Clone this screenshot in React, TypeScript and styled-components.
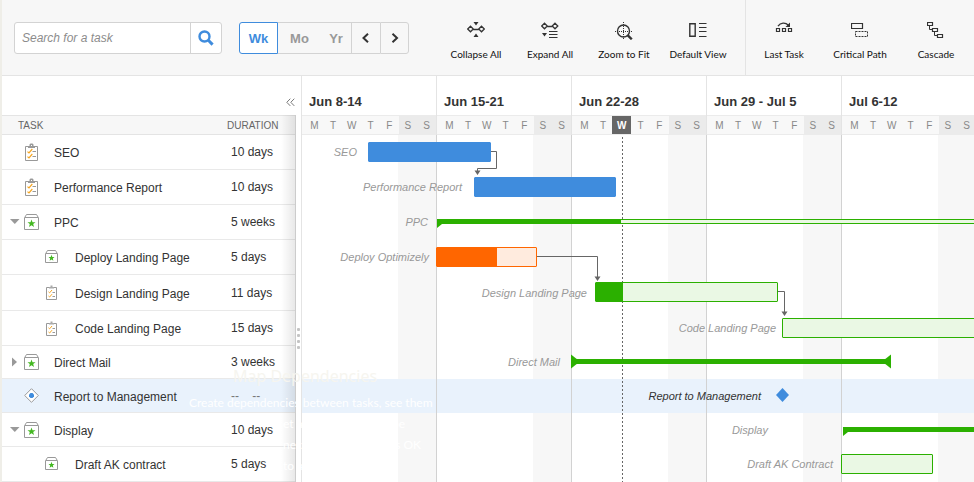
import React from 'react';
import styled, { createGlobalStyle } from 'styled-components';

const GlobalStyle = createGlobalStyle`
  *, *::before, *::after { box-sizing: border-box; }
  body {
    margin: 0;
    background: #fff;
    color: #333;
    font-family: 'Liberation Sans', Arial, sans-serif;
    font-size: 12px;
  }
  button, input { font: inherit; color: inherit; margin: 0; }
  svg { display: block; flex: none; }
`;

const colors = {
  blue: '#3f8cdd',
  green: '#2bb000',
  greenLight: '#eaf8e4',
  orange: '#ff6600',
  orangeLight: '#ffebde',
  line: '#e4e4e4',
  highlight: '#e9f2fc',
};

/* ---------- data ---------- */

type IconKind = 'task' | 'project' | 'milestone';

interface TaskRow {
  name: string;
  duration: string;
  icon: IconKind;
  child?: boolean;
  caret?: 'open' | 'closed';
  height: number;
  selected?: boolean;
  label: string;
  labelEnd: number;
  kind: 'bar' | 'summary' | 'span' | 'milestone';
  tone: 'blue' | 'green' | 'orange';
  start: number;
  end: number;
  done: number;
}

const rows: TaskRow[] = [
  { name: 'SEO', duration: '10 days', icon: 'task', height: 35, label: 'SEO', labelEnd: 55, kind: 'bar', tone: 'blue', start: 66, end: 189, done: 189 },
  { name: 'Performance Report', duration: '10 days', icon: 'task', height: 35, label: 'Performance Report', labelEnd: 160, kind: 'bar', tone: 'blue', start: 172, end: 314, done: 314 },
  { name: 'PPC', duration: '5 weeks', icon: 'project', caret: 'open', height: 35, label: 'PPC', labelEnd: 126, kind: 'summary', tone: 'green', start: 135, end: 800, done: 319 },
  { name: 'Deploy Landing Page', duration: '5 days', icon: 'project', child: true, height: 35, label: 'Deploy Optimizely', labelEnd: 127, kind: 'bar', tone: 'orange', start: 134, end: 235, done: 195 },
  { name: 'Design Landing Page', duration: '11 days', icon: 'task', child: true, height: 36, label: 'Design Landing Page', labelEnd: 285, kind: 'bar', tone: 'green', start: 293, end: 476, done: 321 },
  { name: 'Code Landing Page', duration: '15 days', icon: 'task', child: true, height: 35, label: 'Code Landing Page', labelEnd: 474, kind: 'bar', tone: 'green', start: 480, end: 800, done: 480 },
  { name: 'Direct Mail', duration: '3 weeks', icon: 'project', caret: 'closed', height: 33, label: 'Direct Mail', labelEnd: 258, kind: 'span', tone: 'green', start: 269, end: 589, done: 589 },
  { name: 'Report to Management', duration: '--    --', icon: 'milestone', height: 34, selected: true, label: 'Report to Management', labelEnd: 459, kind: 'milestone', tone: 'blue', start: 474, end: 487, done: 487 },
  { name: 'Display', duration: '10 days', icon: 'project', caret: 'open', height: 34, label: 'Display', labelEnd: 466, kind: 'summary', tone: 'green', start: 541, end: 800, done: 800 },
  { name: 'Draft AK contract', duration: '5 days', icon: 'project', child: true, height: 35, label: 'Draft AK Contract', labelEnd: 531, kind: 'bar', tone: 'green', start: 539, end: 631, done: 539 },
];

const weeks = ['Jun 8-14', 'Jun 15-21', 'Jun 22-28', 'Jun 29 - Jul 5', 'Jul 6-12'];
const days = ['M', 'T', 'W', 'T', 'F', 'S', 'S'];
const today = { week: 2, day: 2, offset: 320 };

/* ---------- page and toolbar ---------- */

const Page = styled.div`
  border-left: 2px solid #efeee8;
  overflow: hidden;
`;

const Toolbar = styled.header`
  display: flex;
  align-items: stretch;
  height: 76px;
  padding-left: 12px;
  background: #f7f7f7;
  border-bottom: 1px solid ${colors.line};
`;

const SearchBox = styled.form`
  display: flex;
  width: 208px;
  height: 32px;
  margin: 22px 17px 0 0;
  background: #fff;
  border: 1px solid #d3d3d3;
  border-radius: 3px;
`;

const SearchInput = styled.input`
  flex: 1;
  min-width: 0;
  padding: 0 7px;
  border: 0;
  background: transparent;
  font-style: italic;
  outline: none;
  &::placeholder { color: #8c8c8c; opacity: 1; }
`;

const SearchButton = styled.button`
  display: grid;
  place-items: center;
  width: 31px;
  padding: 0;
  border: 0;
  border-left: 1px solid #d3d3d3;
  background: transparent;
`;

const Segments = styled.div`
  display: flex;
  height: 32px;
  margin-top: 22px;
`;

const Segment = styled.button<{ $active?: boolean; $first?: boolean; $last?: boolean; $divided?: boolean; $width: number }>`
  display: grid;
  place-items: center;
  width: ${(p) => p.$width}px;
  padding: 0;
  font-size: 13px;
  font-weight: bold;
  color: ${(p) => (p.$active ? colors.blue : '#999')};
  background: ${(p) => (p.$active ? '#fff' : 'transparent')};
  border: 1px solid ${(p) => (p.$active ? colors.blue : '#d3d3d3')};
  ${(p) => !p.$active && !p.$divided && 'border-left: 0;'}
  ${(p) => !p.$active && !p.$last && 'border-right: 0;'}
  border-radius: ${(p) => (p.$first ? '3px 0 0 3px' : p.$last ? '0 3px 3px 0' : '0')};
`;

const Tools = styled.div`
  display: flex;
  margin-left: auto;
`;

const ToolGroup = styled.div<{ $divided?: boolean }>`
  display: flex;
  padding-right: ${(p) => (p.$divided ? 0 : 10)}px;
  border-left: ${(p) => (p.$divided ? `1px solid ${colors.line}` : '0')};
`;

const ToolButton = styled.button<{ $wide?: boolean }>`
  display: flex;
  flex-direction: column;
  align-items: center;
  gap: 7px;
  width: ${(p) => (p.$wide ? 76 : 74)}px;
  padding: 22px 0 0;
  border: 0;
  background: transparent;
  color: #111;
  font-family: Lato, sans-serif;
  font-size: 10px;
  line-height: 14px;
  white-space: nowrap;
`;

/* ---------- task list ---------- */

const Body = styled.main`
  position: relative;
  display: flex;
`;

const ListPane = styled.section`
  flex: none;
  width: 294px;
`;

const ListTop = styled.div`
  display: flex;
  align-items: flex-end;
  justify-content: flex-end;
  height: 39px;
  padding: 0 1px 8px 0;
`;

const PlainButton = styled.button`
  display: grid;
  place-items: center;
  padding: 0;
  border: 0;
  background: transparent;
`;

const TableFrame = styled.div`
  position: relative;
  border-right: 1px solid #ccc;
  &::after {
    content: '';
    position: absolute;
    inset: 0 0 0 auto;
    width: 14px;
    background: linear-gradient(to right, rgba(0, 0, 0, 0), rgba(0, 0, 0, 0.09));
    pointer-events: none;
  }
`;

const Table = styled.table`
  width: 100%;
  border-collapse: separate;
  border-spacing: 0;
  table-layout: fixed;
`;

const HeadCell = styled.th<{ $narrow?: boolean }>`
  width: ${(p) => (p.$narrow ? '68px' : 'auto')};
  height: 20px;
  padding: 0 0 0 ${(p) => (p.$narrow ? 0 : 16)}px;
  background: #f7f7f7;
  border: solid ${colors.line};
  border-width: 1px 0;
  color: #666;
  font-size: 10px;
  font-weight: normal;
  text-align: left;
`;

const Cell = styled.td<{ $height: number; $selected?: boolean; $duration?: boolean }>`
  height: ${(p) => p.$height}px;
  padding: 0 0 0 ${(p) => (p.$duration ? 4 : 0)}px;
  border-bottom: 1px solid #e9e9e9;
  background: ${(p) => (p.$selected ? colors.highlight : 'transparent')};
  color: ${(p) => (p.$selected && p.$duration ? '#777' : '#333')};
  line-height: 16px;
  white-space: pre;
`;

const TaskName = styled.div<{ $child?: boolean }>`
  display: flex;
  align-items: center;
  padding-left: ${(p) => (p.$child ? 21 : 0)}px;
`;

const CaretSlot = styled.span`
  display: flex;
  width: 22px;
  padding-left: 8px;
`;

const IconSlot = styled.span`
  display: flex;
  width: 30px;
`;

const NameText = styled.span`
  padding-top: 2px;
`;

const Splitter = styled.div`
  display: flex;
  flex: none;
  flex-direction: column;
  align-items: center;
  gap: 3px;
  width: 5px;
  padding-top: 252px;
`;

const Grip = styled.span`
  width: 3px;
  height: 3px;
  border-radius: 1px;
  background: #c4c4c4;
`;

/* ---------- timeline ---------- */

const Timeline = styled.section`
  flex: 1;
  min-width: 0;
  overflow: hidden;
  border-left: 1px solid ${colors.line};
`;

const WeekGrid = styled.div`
  display: grid;
  grid-template-columns: repeat(5, 135px);
`;

const Week = styled.div`
  border-right: 1px solid ${colors.line};
`;

const WeekTitle = styled.div`
  height: 39px;
  padding: 18px 0 0 7px;
  font-size: 13px;
  font-weight: bold;
  line-height: 16px;
  white-space: nowrap;
`;

const DayGrid = styled.div`
  display: grid;
  grid-template-columns: repeat(7, 1fr);
  height: 20px;
  padding-left: 3px;
  background: #f8f8f8;
  border: solid #ebebeb;
  border-width: 1px 0;
`;

const Day = styled.span<{ $weekend?: boolean; $today?: boolean }>`
  display: grid;
  place-items: center;
  background: ${(p) => (p.$today ? '#666' : p.$weekend ? '#ebebeb' : 'transparent')};
  color: ${(p) => (p.$today ? '#fff' : '#888')};
  font-size: 10px;
  font-weight: ${(p) => (p.$today ? 'bold' : 'normal')};
`;

const Canvas = styled.div`
  position: relative;
  isolation: isolate;
`;

const WeekendLayer = styled(WeekGrid)`
  position: absolute;
  inset: 0;
  z-index: -1;
`;

const WeekendColumn = styled.div`
  margin: 0 1px 0 96px;
  background: #f7f7f7;
`;

const RuleLayer = styled(WeekGrid)`
  position: absolute;
  inset: 0;
`;

const WeekRule = styled.div`
  border-right: 1px solid #d2d2d2;
`;

const TodayRule = styled.div`
  position: absolute;
  top: 2px;
  bottom: 0;
  width: 1px;
  background: repeating-linear-gradient(#666 0 2px, transparent 2px 4px);
`;

const Lane = styled.div<{ $height: number; $selected?: boolean }>`
  display: flex;
  align-items: center;
  height: ${(p) => p.$height}px;
  padding-bottom: 2px;
  background: ${(p) => (p.$selected ? colors.highlight : 'transparent')};
  background-clip: padding-box;
`;

const LaneLabel = styled.span<{ $selected?: boolean }>`
  position: relative;
  z-index: 1;
  flex: none;
  padding-top: 1px;
  color: ${(p) => (p.$selected ? '#333' : '#999')};
  font-size: 11px;
  font-style: italic;
  text-align: right;
  white-space: nowrap;
`;

const Item = styled.div`
  position: relative;
  z-index: 1;
  flex: none;
`;

const fills = {
  blue: { solid: colors.blue, light: colors.blue },
  green: { solid: colors.green, light: colors.greenLight },
  orange: { solid: colors.orange, light: colors.orangeLight },
};

const Bar = styled.div<{ $tone: TaskRow['tone'] }>`
  height: 20px;
  overflow: hidden;
  background: ${(p) => fills[p.$tone].light};
  border: 1px solid ${(p) => fills[p.$tone].solid};
  border-radius: 1px;
`;

const BarDone = styled.div<{ $tone: TaskRow['tone'] }>`
  height: 100%;
  background: ${(p) => fills[p.$tone].solid};
`;

const SummaryLine = styled.div`
  height: 5px;
  background: ${colors.greenLight};
  border: solid ${colors.green};
  border-width: 1px 0;
`;

const SummaryDone = styled.div`
  height: 5px;
  margin-top: -1px;
  background: ${colors.green};
`;

const Cap = styled.svg<{ $end?: boolean }>`
  position: absolute;
  top: -5px;
  ${(p) => (p.$end ? 'right: 0;' : 'left: 0;')}
`;

const LinkLayer = styled.svg`
  position: absolute;
  inset: 0;
  z-index: 2;
`;

/* Faded caption that lies over the list and the timeline */
const Caption = styled.aside`
  position: absolute;
  top: 287px;
  left: 187px;
  z-index: 3;
  width: 232px;
  color: #fff;
  font-family: Lato, 'Noto Sans', sans-serif;
  font-size: 12px;
  line-height: 21px;
  text-align: center;
  white-space: nowrap;
  pointer-events: none;
`;

const CaptionTitle = styled.h2`
  margin: 0 0 3px;
  color: #f6f5ef;
  font-family: 'Noto Sans', sans-serif;
  font-size: 16px;
  font-weight: normal;
  line-height: 26px;
`;

const CaptionLine = styled.p<{ $right?: number }>`
  display: flex;
  justify-content: space-between;
  margin: 0;
  padding: 0 ${(p) => p.$right ?? 0}px 0 94px;
`;

/* ---------- icons ---------- */

const SearchIcon = () => (
  <svg width="16" height="16" viewBox="0 0 16 16" fill="none" stroke={colors.blue}>
    <circle cx="6.5" cy="6.5" r="5" strokeWidth="2.4" />
    <path d="M10.3 10.3L14.6 14.6" strokeWidth="3" />
  </svg>
);

const Chevron = ({ right }: { right?: boolean }) => (
  <svg width="10" height="10" viewBox="0 0 10 10" fill="none" stroke="#333" strokeWidth="2">
    <path d={right ? 'M2.5 .8L7 5L2.5 9.2' : 'M7 .8L2.5 5L7 9.2'} />
  </svg>
);

const DoubleChevron = () => (
  <svg width="9" height="9" viewBox="0 0 9 9" fill="none" stroke="#777">
    <path d="M4.3 .7L.8 4.3L4.3 7.9M8.3 .7L4.8 4.3L8.3 7.9" />
  </svg>
);

const Caret = ({ open }: { open: boolean }) => (
  <svg width="10" height="10" viewBox="0 0 10 10" fill="#999">
    <path d={open ? 'M0 2H9.5L4.8 7Z' : 'M2 .5V9.5L7 5Z'} />
  </svg>
);

const ClipboardIcon = ({ small }: { small?: boolean }) =>
  small ? (
    <svg width="13" height="15" viewBox="0 0 13 15" fill="none">
      <path d="M1.5 2.5H11.5V14.5H1.5Z" stroke="#999" />
      <path d="M4 3.5V2H5.5V.5H7.5V2H9V3.5Z" fill="#aaa" />
      <path d="M3.5 6.8L4.6 7.8L7 5M3.5 11L4.6 12L7 9.2" stroke="#f5a623" />
      <path d="M7.5 7.5H10M7.5 11.5H10" stroke="#999" />
    </svg>
  ) : (
    <svg width="15" height="18" viewBox="0 0 15 18" fill="none">
      <path d="M1.5 3.5H13.5V17.5H1.5Z" stroke="#999" />
      <path d="M4 5V3H5.5V1.5L6.5 .5H8.5L9.5 1.5V3H11V5Z" fill="#999" />
      <path d="M7 2H8V3H7Z" fill="#fff" />
      <path d="M3.5 8.6L5 10L8.3 6M3.5 13.6L5 15L8.3 11" stroke="#f5a623" strokeWidth="1.2" />
      <path d="M8.5 8.5H12M8.5 13.5H12" stroke="#999" />
    </svg>
  );

const ProjectIcon = ({ small }: { small?: boolean }) =>
  small ? (
    <svg width="13" height="14" viewBox="0 0 13 14" fill="none">
      <path d="M.5 3.5H12.5V12.5H.5Z" stroke="#999" />
      <path d="M1 3L2.5 .5H10.5L12 3" stroke="#999" />
      <path d="M6.5 4.8L7.3 7H9.5L7.8 8.4L8.4 10.8L6.5 9.4L4.6 10.8L5.2 8.4L3.5 7H5.7Z" fill="#44b822" />
    </svg>
  ) : (
    <svg width="15" height="16" viewBox="0 0 15 16" fill="none">
      <path d="M.5 3.5H14.5V15.5H.5Z" stroke="#999" />
      <path d="M1 3L2.5 .5H12.5L14 3" stroke="#999" />
      <path d="M7.5 5.4L8.5 8.2H11.5L9.2 10.1L10 13L7.5 11.3L5 13L5.8 10.1L3.5 8.2H6.5Z" fill="#44b822" />
    </svg>
  );

const MilestoneIcon = () => (
  <svg width="15" height="15" viewBox="0 0 15 15">
    <path d="M7.5 .7L14.3 7.5L7.5 14.3L.7 7.5Z" fill="#fff" stroke="#999" />
    <path d="M6.5 5H8.5L10 6.5V8.5L8.5 10H6.5L5 8.5V6.5Z" fill={colors.blue} />
  </svg>
);

const ToolIcon = ({ children }: { children: React.ReactNode }) => (
  <svg width="18" height="18" viewBox="0 0 18 18" fill="none" stroke="#333">
    {children}
  </svg>
);

const CollapseIcon = () => (
  <ToolIcon>
    <path d="M3.5 4.2L6.3 7L3.5 9.8L.7 7ZM14.5 4.2L17.3 7L14.5 9.8L11.7 7ZM6.3 7.5H11.7" strokeWidth="1.3" />
    <path d="M6.5 0H11.5L9 3.5ZM6.5 15H11.5L9 11.5Z" fill="#333" stroke="none" />
  </ToolIcon>
);

const ExpandIcon = () => (
  <ToolIcon>
    <path d="M3.5 1.2L6.3 4L3.5 6.8L.7 4ZM14 1.2L16.8 4L14 6.8L11.2 4ZM6.3 4.5H11.2" strokeWidth="1.3" />
    <path d="M1 11H6L3.5 14.5Z" fill="#333" stroke="none" />
    <path d="M8 9.5H16.5M8 12.5H16.5M8 15.5H16.5" strokeWidth="1.2" />
  </ToolIcon>
);

const ZoomIcon = () => (
  <ToolIcon>
    <circle cx="8.5" cy="9" r="6" strokeWidth="1.4" />
    <path d="M12.8 13.3L16.8 17.3" strokeWidth="2.4" />
    <path d="M0 9.5H17M8.5 0V18" strokeDasharray="1 1" />
  </ToolIcon>
);

const ViewIcon = () => (
  <ToolIcon>
    <path d="M.8 1.8H6.2V14.2H.8Z" strokeWidth="1.4" />
    <path d="M10 1.5H17.5M10 5.5H17.5M10 9.5H17.5M10 14.5H17.5" strokeWidth="1.2" />
  </ToolIcon>
);

const LastTaskIcon = () => (
  <ToolIcon>
    <path d="M1.5 6.5H4.5V9.5H1.5ZM7.5 6.5H10.5V9.5H7.5ZM13.5 6.5H16.5V9.5H13.5Z" strokeWidth="1.2" />
    <path d="M3 4.2C5.5 .2 10.5 .2 13.2 3" strokeWidth="1.3" />
    <path d="M15 .5V5H10.5Z" fill="#333" stroke="none" />
  </ToolIcon>
);

const CriticalPathIcon = () => (
  <ToolIcon>
    <path d="M.5 1.5H11.5V6.5H.5Z" strokeWidth="1.2" />
    <path d="M4.5 9.5H16.5V14.5H4.5Z" strokeDasharray="2 1" />
  </ToolIcon>
);

const CascadeIcon = () => (
  <ToolIcon>
    <path d="M.5 .5H5.5V3.5H.5ZM5.5 6.5H10.5V9.5H5.5ZM10.5 12.5H15.5V15.5H10.5Z" strokeWidth="1.2" />
    <path d="M2.5 3.5V7.5H5.5M7.5 9.5V13.5H10.5" />
  </ToolIcon>
);

const listTools = [
  { label: 'Collapse All', Icon: CollapseIcon },
  { label: 'Expand All', Icon: ExpandIcon },
  { label: 'Zoom to Fit', Icon: ZoomIcon },
  { label: 'Default View', Icon: ViewIcon },
];

const pathTools = [
  { label: 'Last Task', Icon: LastTaskIcon },
  { label: 'Critical Path', Icon: CriticalPathIcon },
  { label: 'Cascade', Icon: CascadeIcon },
];

/* ---------- parts ---------- */

const RowIcon = ({ kind, small }: { kind: IconKind; small?: boolean }) => {
  if (kind === 'task') return <ClipboardIcon small={small} />;
  if (kind === 'project') return <ProjectIcon small={small} />;
  return <MilestoneIcon />;
};

const TaskTable = () => (
  <TableFrame>
    <Table>
      <thead>
        <tr>
          <HeadCell scope="col">TASK</HeadCell>
          <HeadCell scope="col" $narrow>DURATION</HeadCell>
        </tr>
      </thead>
      <tbody>
        {rows.map((row) => (
          <tr key={row.name}>
            <Cell $height={row.height} $selected={row.selected}>
              <TaskName $child={row.child}>
                <CaretSlot>
                  {row.caret && (
                    <PlainButton aria-label={`Toggle ${row.name}`}>
                      <Caret open={row.caret === 'open'} />
                    </PlainButton>
                  )}
                </CaretSlot>
                <IconSlot>
                  <RowIcon kind={row.icon} small={row.child} />
                </IconSlot>
                <NameText>{row.name}</NameText>
              </TaskName>
            </Cell>
            <Cell $height={row.height} $selected={row.selected} $duration>
              {row.duration}
            </Cell>
          </tr>
        ))}
      </tbody>
    </Table>
  </TableFrame>
);

const LaneItem = ({ row }: { row: TaskRow }) => {
  const { kind, tone, start, done } = row;
  if (kind === 'bar') {
    return (
      <Bar $tone={tone}>
        <BarDone $tone={tone} style={{ width: Math.max(0, done - start - 1) }} />
      </Bar>
    );
  }
  if (kind === 'milestone') {
    return (
      <svg width="13" height="14" viewBox="0 0 13 14">
        <path d="M6.5 0L13 7L6.5 14L0 7Z" fill={colors.blue} />
      </svg>
    );
  }
  return (
    <SummaryLine>
      <SummaryDone style={{ width: done - start }} />
      {kind === 'summary' ? (
        <Cap width="7" height="15" viewBox="0 0 7 15">
          <path d="M0 5H7V9L5 10L0 14Z" fill={colors.green} />
        </Cap>
      ) : (
        <>
          <Cap width="7" height="15" viewBox="0 0 7 15">
            <path d="M0 .5L7 6V9L0 14.5Z" fill={colors.green} />
          </Cap>
          <Cap $end width="7" height="15" viewBox="0 0 7 15">
            <path d="M7 .5L0 6V9L7 14.5Z" fill={colors.green} />
          </Cap>
        </>
      )}
    </SummaryLine>
  );
};

const TimelineCanvas = () => (
  <Canvas>
    <WeekendLayer>
      {weeks.map((week) => (
        <WeekendColumn key={week} />
      ))}
    </WeekendLayer>
    <RuleLayer>
      {weeks.map((week) => (
        <WeekRule key={week} />
      ))}
      <TodayRule style={{ left: today.offset }} />
    </RuleLayer>
    {rows.map((row) => (
      <Lane key={row.name} $height={row.height} $selected={row.selected}>
        <LaneLabel $selected={row.selected} style={{ width: row.labelEnd }}>
          {row.label}
        </LaneLabel>
        <Item style={{ marginLeft: row.start - row.labelEnd, width: row.end - row.start }}>
          <LaneItem row={row} />
        </Item>
      </Lane>
    ))}
    <LinkLayer width="675" height="347" viewBox="0 0 675 347" fill="none" stroke="#666">
      <path d="M189 16.5H194.5V33.5H175.5V36" />
      <path d="M235 121.5H295.5V142" />
      <path d="M476 156.5H482.5V177" />
      <path
        d="M172.5 35.5H178.5L175.5 40ZM292.5 141.5H298.5L295.5 146ZM479.5 176.5H485.5L482.5 181Z"
        fill="#666"
        stroke="none"
      />
    </LinkLayer>
  </Canvas>
);

export default function App() {
  return (
    <>
      <GlobalStyle />
      <Page>
        <Toolbar>
          <SearchBox role="search" onSubmit={(e) => e.preventDefault()}>
            <SearchInput type="text" aria-label="Search for a task" placeholder="Search for a task" />
            <SearchButton type="submit" aria-label="Search">
              <SearchIcon />
            </SearchButton>
          </SearchBox>
          <Segments>
            <Segment $width={39} $active $first aria-pressed="true">Wk</Segment>
            <Segment $width={43}>Mo</Segment>
            <Segment $width={30}>Yr</Segment>
            <Segment $width={29} $divided aria-label="Previous"><Chevron /></Segment>
            <Segment $width={29} $divided $last aria-label="Next"><Chevron right /></Segment>
          </Segments>
          <Tools>
            <ToolGroup>
              {listTools.map(({ label, Icon }) => (
                <ToolButton key={label}><Icon />{label}</ToolButton>
              ))}
            </ToolGroup>
            <ToolGroup $divided>
              {pathTools.map(({ label, Icon }) => (
                <ToolButton key={label} $wide><Icon />{label}</ToolButton>
              ))}
            </ToolGroup>
          </Tools>
        </Toolbar>
        <Body>
          <ListPane>
            <ListTop>
              <PlainButton aria-label="Hide task list"><DoubleChevron /></PlainButton>
            </ListTop>
            <TaskTable />
          </ListPane>
          <Splitter>
            <Grip /><Grip /><Grip /><Grip />
          </Splitter>
          <Timeline>
            <WeekGrid>
              {weeks.map((week, w) => (
                <Week key={week}>
                  <WeekTitle>{week}</WeekTitle>
                  <DayGrid>
                    {days.map((day, d) => (
                      <Day key={d} $weekend={d > 4} $today={w === today.week && d === today.day}>
                        {day}
                      </Day>
                    ))}
                  </DayGrid>
                </Week>
              ))}
            </WeekGrid>
            <TimelineCanvas />
          </Timeline>
          <Caption>
            <CaptionTitle>Map Dependencies</CaptionTitle>
            Create dependencies between tasks, see them
            <CaptionLine $right={16}><span>et a</span><span>be</span></CaptionLine>
            <CaptionLine><span>next</span><span>'s OK</span></CaptionLine>
            <CaptionLine><span>to a</span></CaptionLine>
          </Caption>
        </Body>
      </Page>
    </>
  );
}
